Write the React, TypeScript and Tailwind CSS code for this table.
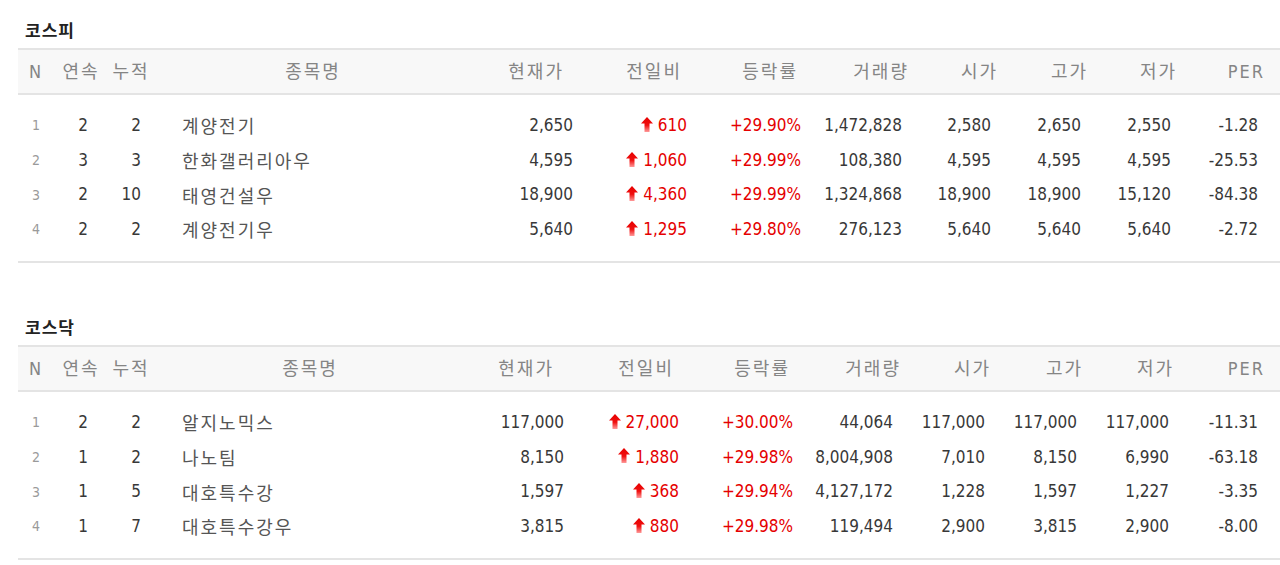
import React from 'react';

type Row = {
  n: number;
  streak: number;
  total: number;
  name: string;
  price: string;
  change: string;
  rate: string;
  volume: string;
  open: string;
  high: string;
  low: string;
  per: string;
};

const kospi: Row[] = [
  { n: 1, streak: 2, total: 2, name: '계양전기', price: '2,650', change: '610', rate: '+29.90%', volume: '1,472,828', open: '2,580', high: '2,650', low: '2,550', per: '-1.28' },
  { n: 2, streak: 3, total: 3, name: '한화갤러리아우', price: '4,595', change: '1,060', rate: '+29.99%', volume: '108,380', open: '4,595', high: '4,595', low: '4,595', per: '-25.53' },
  { n: 3, streak: 2, total: 10, name: '태영건설우', price: '18,900', change: '4,360', rate: '+29.99%', volume: '1,324,868', open: '18,900', high: '18,900', low: '15,120', per: '-84.38' },
  { n: 4, streak: 2, total: 2, name: '계양전기우', price: '5,640', change: '1,295', rate: '+29.80%', volume: '276,123', open: '5,640', high: '5,640', low: '5,640', per: '-2.72' },
];

const kosdaq: Row[] = [
  { n: 1, streak: 2, total: 2, name: '알지노믹스', price: '117,000', change: '27,000', rate: '+30.00%', volume: '44,064', open: '117,000', high: '117,000', low: '117,000', per: '-11.31' },
  { n: 2, streak: 1, total: 2, name: '나노팀', price: '8,150', change: '1,880', rate: '+29.98%', volume: '8,004,908', open: '7,010', high: '8,150', low: '6,990', per: '-63.18' },
  { n: 3, streak: 1, total: 5, name: '대호특수강', price: '1,597', change: '368', rate: '+29.94%', volume: '4,127,172', open: '1,228', high: '1,597', low: '1,227', per: '-3.35' },
  { n: 4, streak: 1, total: 7, name: '대호특수강우', price: '3,815', change: '880', rate: '+29.98%', volume: '119,494', open: '2,900', high: '3,815', low: '2,900', per: '-8.00' },
];

const headers = ['N', '연속', '누적', '종목명', '현재가', '전일비', '등락률', '거래량', '시가', '고가', '저가', 'PER'];

type Layout = {
  cols: string;
  head: string[];
};

const kospiLayout: Layout = {
  cols: 'grid-cols-[36px_50px_46px_316px_115px_114px_114px_101px_89px_90px_90px_101px]',
  head: [
    'justify-center',
    'justify-center pl-[4px]',
    'justify-center pl-[8px]',
    'justify-center pl-[10px]',
    'justify-end pr-[17px]',
    'justify-end pr-[13px]',
    'justify-end pr-[11px]',
    'justify-end pr-[1px]',
    'justify-end pr-[1px]',
    'justify-end pr-[1px]',
    'justify-end pr-[2px]',
    'justify-end pr-[15px]',
  ],
};

const kosdaqLayout: Layout = {
  cols: 'grid-cols-[36px_50px_46px_307px_115px_115px_114px_100px_92px_92px_92px_103px]',
  head: [
    'justify-center',
    'justify-center pl-[4px]',
    'justify-center pl-[8px]',
    'justify-center pl-[13px]',
    'justify-end pr-[18px]',
    'justify-end pr-[13px]',
    'justify-end pr-[11px]',
    'justify-end pr-[0px]',
    'justify-end pr-[2px]',
    'justify-end pr-[2px]',
    'justify-end pr-[3px]',
    'justify-end pr-[15px]',
  ],
};

function UpArrow() {
  return (
    <svg width="12" height="15" viewBox="0 0 12 15" className="mr-[5px] mb-[3px] shrink-0">
      <defs>
        <linearGradient id="upArrowFill" x1="0" y1="0" x2="0" y2="1">
          <stop offset="0" stopColor="#e60000" />
          <stop offset="0.55" stopColor="#f01010" />
          <stop offset="1" stopColor="#ff9a9a" />
        </linearGradient>
      </defs>
      <path d="M6 0 L12 6.6 L8.5 6.6 L8.5 15 L3.5 15 L3.5 6.6 L0 6.6 Z" fill="url(#upArrowFill)" />
    </svg>
  );
}

function StockTable({ title, rows, layout }: { title: string; rows: Row[]; layout: Layout }) {
  const cell = 'flex items-center';
  const num = `${cell} justify-end pr-[8px] text-[#383838]`;
  return (
    <section>
      <h2 className="pl-[25px] mb-[6px] text-[17px] leading-[24px] font-bold tracking-[1px] text-[#222] font-['Noto_Sans_CJK_KR',sans-serif]">
        {title}
      </h2>
      <div className="ml-[18px] border-y-2 border-[#e4e4e4]">
        <div className={`grid ${layout.cols} h-[43px] bg-[#f8f8f8] text-[18px] tracking-[2px] text-[#858585] font-['DejaVu_Sans_Condensed','Noto_Sans_CJK_KR',sans-serif]`}>
          {headers.map((h, i) => (
            <div key={h} className={`${cell} ${layout.head[i]}`}>
              {h}
            </div>
          ))}
        </div>
      </div>
      <div className="ml-[18px] pt-[13.5px] pb-[13.6px] border-b-2 border-[#e4e4e4] text-[17px] font-['DejaVu_Sans_Condensed','Noto_Sans_CJK_KR',sans-serif]">
        {rows.map((r) => (
          <div key={r.n} className={`grid ${layout.cols} h-[34.7px]`}>
            <div className={`${cell} justify-center text-[14px] text-[#9a9a9a]`}>{r.n}</div>
            <div className={`${cell} justify-end pr-[16px] text-[#383838]`}>{r.streak}</div>
            <div className={`${cell} justify-end pr-[9px] text-[#383838]`}>{r.total}</div>
            <div className={`${cell} justify-start pl-[32px] text-[18px] tracking-[2px] text-[#555] font-['Noto_Sans_CJK_KR',sans-serif]`}>
              {r.name}
            </div>
            <div className={num}>{r.price}</div>
            <div className={`${cell} justify-end pr-[8px] text-[#e50000]`}>
              <UpArrow />
              {r.change}
            </div>
            <div className={`${cell} justify-end pr-[8px] text-[#e50000]`}>{r.rate}</div>
            <div className={num}>{r.volume}</div>
            <div className={num}>{r.open}</div>
            <div className={num}>{r.high}</div>
            <div className={num}>{r.low}</div>
            <div className={`${cell} justify-end pr-[22px] text-[#383838]`}>{r.per}</div>
          </div>
        ))}
      </div>
    </section>
  );
}

export default function App() {
  return (
    <div className="w-[1280px] h-[565px] overflow-hidden bg-white pt-[18px]">
      <StockTable title="코스피" rows={kospi} layout={kospiLayout} />
      <div className="h-[52px]" />
      <StockTable title="코스닥" rows={kosdaq} layout={kosdaqLayout} />
    </div>
  );
}
